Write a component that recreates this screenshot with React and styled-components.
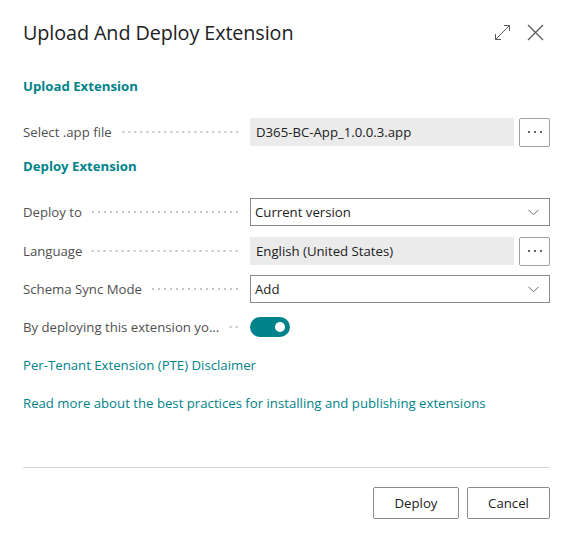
import styled, { createGlobalStyle } from 'styled-components'

const GlobalStyle = createGlobalStyle`
	html, body {
		margin: 0;
		padding: 0;
		background: #ffffff;
	}
	body {
		font-family: "Open Sans", "Noto Sans", sans-serif;
		color: #212121;
	}
`

const Dialog = styled.div`
	width: 573px;
	height: 541px;
	box-sizing: border-box;
	padding: 0 23px;
	display: flex;
	flex-direction: column;
	background: #fff;
`

const Header = styled.div`
	height: 64px;
	display: flex;
	align-items: center;
	justify-content: space-between;
`

const Title = styled.h1`
	margin: 0;
	font-size: 19.8px;
	font-weight: 400;
	color: #212121;
	letter-spacing: -0.1px;
`

const HeaderIcons = styled.div`
	display: flex;
	align-items: center;
	gap: 16px;
	margin-right: 6px;
	& > svg {
		width: 17px;
		height: 17px;
		stroke: #5a5a5a;
		fill: none;
	}
`

const SectionTitle = styled.h2`
	margin: ${p => p.$top}px 0 ${p => p.$bottom}px;
	font-size: 13.2px;
	font-weight: 700;
	color: #00838a;
	line-height: 18px;
`

const Row = styled.div`
	display: flex;
	align-items: center;
	height: 28px;
	margin-bottom: ${p => p.$gap || 10}px;
`

const Label = styled.div`
	width: 227px;
	flex-shrink: 0;
	display: flex;
	align-items: center;
	font-size: 13.2px;
	color: #505050;
	padding-right: 10px;
	box-sizing: border-box;
	white-space: nowrap;
`

const Leader = styled.span`
	flex: 1;
	height: 4px;
	margin-left: 8px;
	background-image: radial-gradient(circle, #c4c4c4 0.8px, transparent 1.2px);
	background-size: 6px 4px;
	background-repeat: repeat-x;
	background-position: right center;
`

const ReadOnly = styled.div`
	flex: 1;
	height: 28px;
	background: #ebebeb;
	display: flex;
	align-items: center;
	padding: 0 6px;
	font-size: 13.2px;
	color: #212121;
`

const EllipsisButton = styled.button`
	width: 31px;
	height: 29px;
	margin-left: 5px;
	border: 1px solid #a0a0a0;
	border-radius: 2px;
	background: #fff;
	display: flex;
	align-items: center;
	justify-content: center;
	gap: 4px;
	padding: 0;
	& > span {
		width: 2px;
		height: 2px;
		border-radius: 50%;
		background: #333;
	}
`

const Select = styled.div`
	flex: 1;
	height: 28px;
	box-sizing: border-box;
	border: 1px solid #8a8a8a;
	display: flex;
	align-items: center;
	justify-content: space-between;
	padding: 0 10px 0 4px;
	font-size: 13.2px;
	color: #212121;
	& > svg {
		width: 11px;
		height: 7px;
		stroke: #666;
		fill: none;
	}
`

const Toggle = styled.div`
	width: 40px;
	height: 20px;
	border-radius: 10px;
	background: #00838a;
	position: relative;
	&::after {
		content: "";
		position: absolute;
		right: 5px;
		top: 5px;
		width: 10px;
		height: 10px;
		border-radius: 50%;
		background: #fff;
	}
`

const Link = styled.a`
	display: block;
	font-size: 13.2px;
	color: #00838a;
	text-decoration: none;
	margin-top: ${p => p.$top}px;
	line-height: 18px;
`

const Spacer = styled.div`
	flex: 1;
`

const Footer = styled.div`
	box-sizing: border-box;
	border-top: 1px solid #d4d4d4;
	padding-top: 19px;
	height: 74px;
	display: flex;
	justify-content: flex-end;
	align-items: flex-start;
	gap: 8px;
`

const Button = styled.button`
	width: ${p => p.$width}px;
	height: 32px;
	background: #fff;
	border: 1px solid #8a8a8a;
	border-radius: 2px;
	font-family: inherit;
	font-size: 13.2px;
	color: #212121;
`

function Chevron () {
	return (
		<svg viewBox="0 0 11 7">
			<path d="M0.5 0.8 L5.5 5.8 L10.5 0.8" strokeWidth="1" />
		</svg>
	)
}

function Ellipsis () {
	return (
		<EllipsisButton>
			<span /><span /><span />
		</EllipsisButton>
	)
}

function App () {
	return (
		<>
			<GlobalStyle />
			<Dialog>
				<Header>
					<Title>Upload And Deploy Extension</Title>
					<HeaderIcons>
						<svg viewBox="0 0 17 17" strokeWidth="1">
							<path d="M1.5 15.5 L15.5 1.5 M10 1.5 H15.5 V7 M1.5 10 V15.5 H7" />
						</svg>
						<svg viewBox="0 0 17 17" strokeWidth="1.3">
							<path d="M1 1 L16 16 M16 1 L1 16" />
						</svg>
					</HeaderIcons>
				</Header>

				<SectionTitle $top={13} $bottom={23}>Upload Extension</SectionTitle>
				<Row $gap={11}>
					<Label>Select .app file<Leader /></Label>
					<ReadOnly>D365-BC-App_1.0.0.3.app</ReadOnly>
					<Ellipsis />
				</Row>
				<SectionTitle $top={0} $bottom={23}>Deploy Extension</SectionTitle>
				<Row $gap={11}>
					<Label>Deploy to<Leader /></Label>
					<Select>Current version<Chevron /></Select>
				</Row>
				<Row $gap={10}>
					<Label>Language<Leader /></Label>
					<ReadOnly>English (United States)</ReadOnly>
					<Ellipsis />
				</Row>
				<Row $gap={10}>
					<Label>Schema Sync Mode<Leader /></Label>
					<Select>Add<Chevron /></Select>
				</Row>
				<Row $gap={0}>
					<Label>By deploying this extension yo...<Leader /></Label>
					<Toggle />
				</Row>
				<Link $top={5}>Per-Tenant Extension (PTE) Disclaimer</Link>
				<Link $top={20}>Read more about the best practices for installing and publishing extensions</Link>
				<Spacer />
				<Footer>
					<Button $width={86}>Deploy</Button>
					<Button $width={83}>Cancel</Button>
				</Footer>
			</Dialog>
		</>
	)
}

export default App
